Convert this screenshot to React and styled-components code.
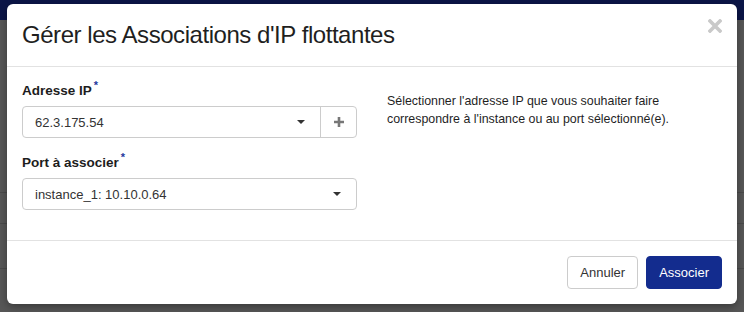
import React from 'react'
import styled, { createGlobalStyle } from 'styled-components'

const GlobalStyle = createGlobalStyle`
  html, body {
    margin: 0;
    padding: 0;
    width: 744px;
    height: 312px;
    overflow: hidden;
    font-family: "Liberation Sans", Arial, sans-serif;
  }
`

const Page = styled.div`
  position: relative;
  width: 744px;
  height: 312px;
  background: #575757;
  overflow: hidden;
`

const NavBar = styled.div`
  height: 20px;
  background: #0b1547;
`

const BgLine = styled.div`
  height: 1px;
  margin-top: ${({ gap }) => gap}px;
  background: #4a4a4a;
`

const Modal = styled.div`
  position: absolute;
  top: 4px;
  left: 7px;
  width: 730px;
  height: 300px;
  background: #fff;
  border-radius: 6px;
  box-shadow: 0 3px 9px rgba(0, 0, 0, 0.35);
  display: flex;
  flex-direction: column;
`

const Header = styled.div`
  position: relative;
  height: 63px;
  box-sizing: border-box;
  padding: 17px 15px 0;
  border-bottom: 1px solid #e2e2e2;
`

const Title = styled.h4`
  margin: 0;
  font-family: "Liberation Sans", Arial, sans-serif;
  font-weight: 400;
  font-size: 24px;
  letter-spacing: -0.45px;
  line-height: 28px;
  color: #1f1f1f;
`

const Close = styled.button`
  position: absolute;
  top: 15px;
  right: 15px;
  padding: 0;
  border: 0;
  background: none;
  width: 14px;
  height: 14px;
  display: flex;
`

const Body = styled.div`
  flex: 1;
  display: grid;
  grid-template-columns: 335px 1fr;
  column-gap: 30px;
  padding: 14px 15px 0;
  border-bottom: 1px solid #e2e2e2;
`

const Field = styled.div`
  margin-bottom: 15px;
`

const Label = styled.label`
  display: block;
  font-weight: 700;
  font-size: 13.5px;
  line-height: 20px;
  color: #1d1d1d;
  margin-bottom: 5px;
`

const Req = styled.sup`
  color: #1e3a9e;
  font-size: 11px;
  margin-left: 2px;
  vertical-align: 6px;
  line-height: 0;
`

const InputGroup = styled.div`
  display: flex;
  height: 32px;
  box-sizing: border-box;
  border: 1px solid #cccccc;
  border-radius: 4px;
`

const Select = styled.div`
  flex: 1;
  display: flex;
  align-items: center;
  justify-content: space-between;
  padding: 0 15px 0 12px;
  font-size: 13px;
  color: #333;
`

const Caret = styled.span`
  width: 0;
  height: 0;
  border-left: 4px solid transparent;
  border-right: 4px solid transparent;
  border-top: 4px solid #333;
`

const Addon = styled.div`
  width: 35px;
  border-left: 1px solid #cccccc;
  display: flex;
  align-items: center;
  justify-content: center;
`

const Help = styled.p`
  margin: 11px 0 0;
  font-size: 12.4px;
  line-height: 18px;
  color: #1f1f1f;
`

const Footer = styled.div`
  height: 63px;
  box-sizing: border-box;
  display: flex;
  justify-content: flex-end;
  align-items: center;
  gap: 8px;
  padding: 0 15px 1px;
`

const Button = styled.button`
  height: 33px;
  padding: 0 12px;
  border-radius: 4px;
  font-family: "Liberation Sans", Arial, sans-serif;
  font-size: 13px;
  border: 1px solid ${({ primary }) => (primary ? '#132c8e' : '#cccccc')};
  background: ${({ primary }) => (primary ? '#132c8e' : '#fff')};
  color: ${({ primary }) => (primary ? '#fff' : '#333')};
`

function App() {
  return (
    <>
      <GlobalStyle />
      <Page>
        <NavBar />
        <BgLine gap={172} />
        <BgLine gap={30} />
        <BgLine gap={44} />
        <Modal>
          <Header>
            <Title>Gérer les Associations d'IP flottantes</Title>
            <Close aria-label="Fermer">
              <svg width="14" height="14" viewBox="0 0 14 14">
                <path d="M2 2 L12 12 M12 2 L2 12" stroke="#c9c9c9" strokeWidth="3.6" strokeLinecap="square" />
              </svg>
            </Close>
          </Header>
          <Body>
            <div>
              <Field>
                <Label>Adresse IP<Req>*</Req></Label>
                <InputGroup>
                  <Select>
                    62.3.175.54
                    <Caret />
                  </Select>
                  <Addon>
                    <svg width="10" height="10" viewBox="0 0 10 10">
                      <path d="M5 0 V10 M0 5 H10" stroke="#777" strokeWidth="2.6" />
                    </svg>
                  </Addon>
                </InputGroup>
              </Field>
              <Field>
                <Label>Port à associer<Req>*</Req></Label>
                <InputGroup>
                  <Select>
                    instance_1: 10.10.0.64
                    <Caret />
                  </Select>
                </InputGroup>
              </Field>
            </div>
            <div>
              <Help>
                Sélectionner l'adresse IP que vous souhaiter faire correspondre à l'instance ou au port sélectionné(e).
              </Help>
            </div>
          </Body>
          <Footer>
            <Button>Annuler</Button>
            <Button primary>Associer</Button>
          </Footer>
        </Modal>
      </Page>
    </>
  )
}

export default App
